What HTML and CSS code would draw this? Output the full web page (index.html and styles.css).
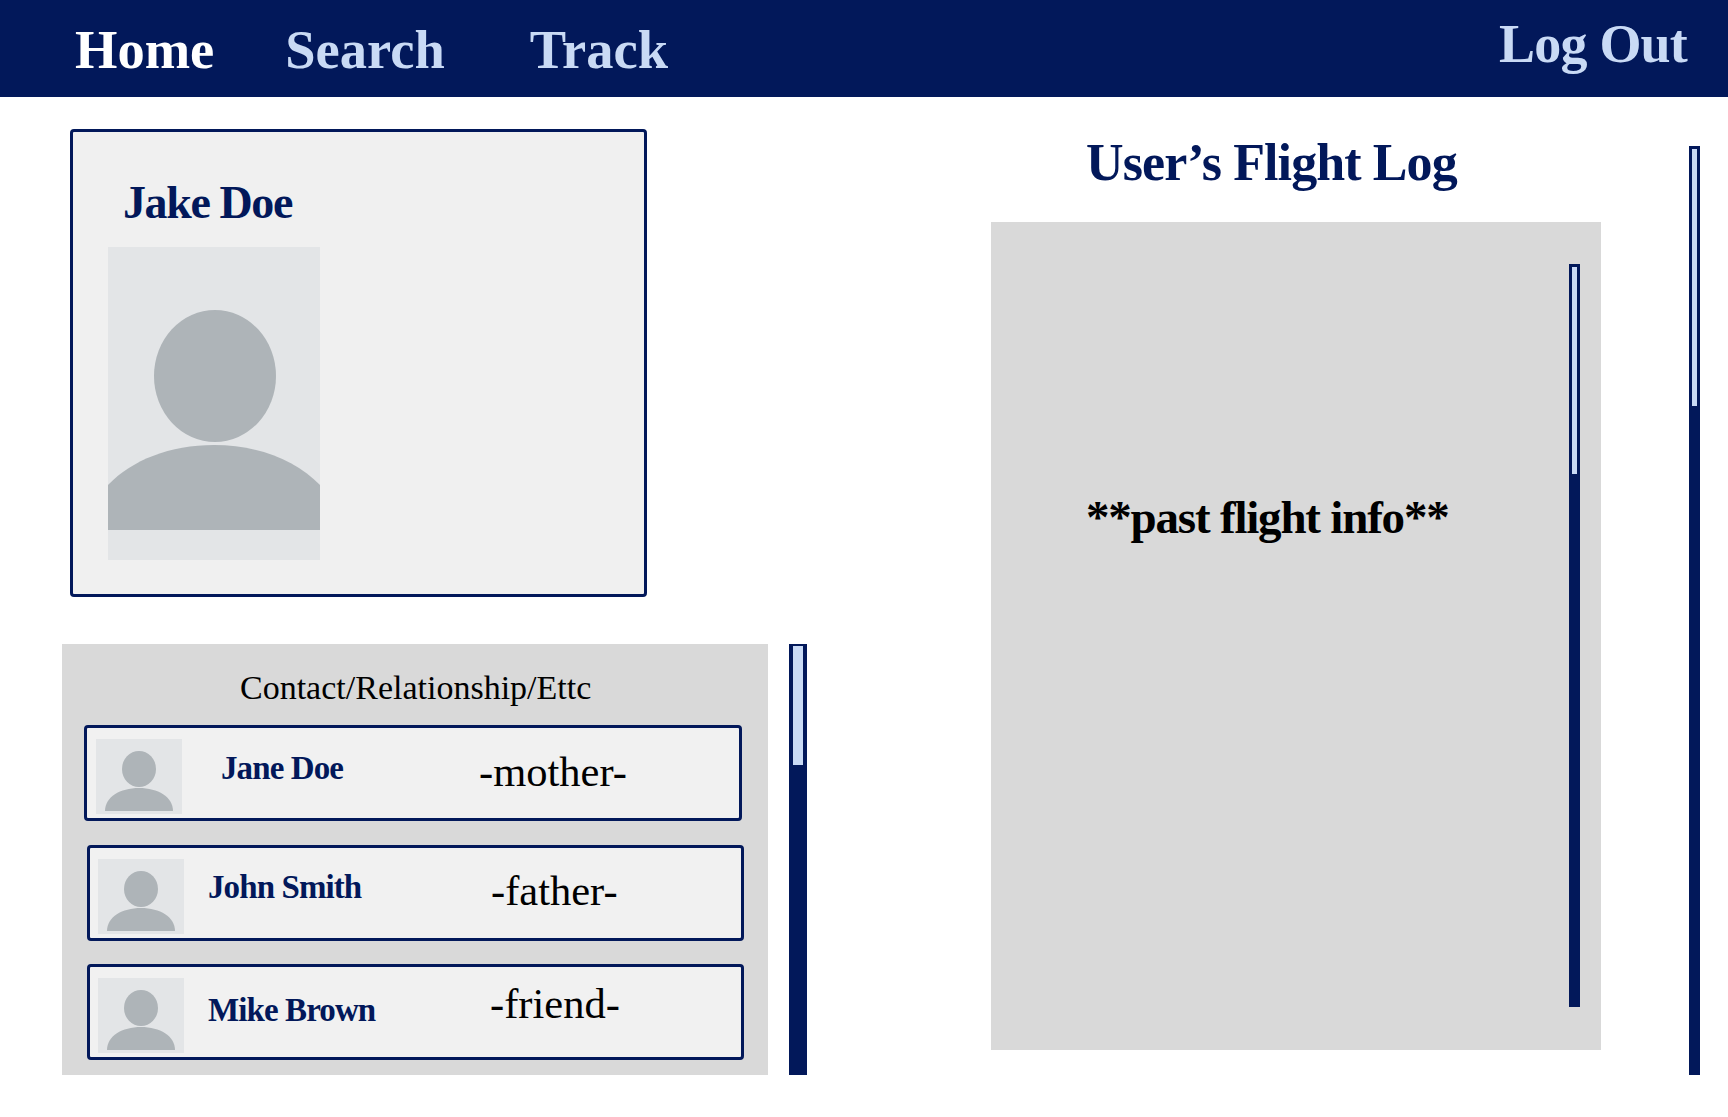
FILE: index.html
```html
<html>
  <head>
    <title>Profile</title>
    <link rel="stylesheet" href="styles.css">
  </head>

  <body>
    <header class="topbar">
      <nav class="nav">
        <a class="nav-link active home">Home</a>
        <a class="nav-link search">Search</a>
        <a class="nav-link track">Track</a>
      </nav>
      <a class="logout">Log Out</a>
    </header>

    <main class="page">
      <section class="left-col">
        <div class="profile-card">
          <h2 class="profile-name">Jake Doe</h2>
          <svg class="profile-pic" viewBox="0 0 212 313">
            <rect width="212" height="313" fill="#e3e5e7"/>
            <ellipse cx="107" cy="129" rx="61" ry="66" fill="#aeb4b8"/>
            <path d="M0 283V238C24 213 62 198 106 198C150 198 188 213 212 238V283Z" fill="#aeb4b8"/>
          </svg>
        </div>

        <div class="contacts-wrap">
          <div class="contacts">
            <p class="contacts-title">Contact/Relationship/Ettc</p>

            <div class="contact first">
              <svg class="contact-pic" viewBox="0 0 86 75">
                <rect width="86" height="75" fill="#e3e5e7"/>
                <ellipse cx="43" cy="30" rx="17" ry="18" fill="#aeb4b8"/>
                <path d="M9 72C9 58 24 49 43 49C62 49 77 58 77 72Z" fill="#aeb4b8"/>
              </svg>
              <span class="contact-name jane">Jane Doe</span>
              <span class="contact-rel mother">-mother-</span>
            </div>

            <div class="contact">
              <svg class="contact-pic" viewBox="0 0 86 75">
                <rect width="86" height="75" fill="#e3e5e7"/>
                <ellipse cx="43" cy="30" rx="17" ry="18" fill="#aeb4b8"/>
                <path d="M9 72C9 58 24 49 43 49C62 49 77 58 77 72Z" fill="#aeb4b8"/>
              </svg>
              <span class="contact-name john">John Smith</span>
              <span class="contact-rel father">-father-</span>
            </div>

            <div class="contact">
              <svg class="contact-pic" viewBox="0 0 86 75">
                <rect width="86" height="75" fill="#e3e5e7"/>
                <ellipse cx="43" cy="30" rx="17" ry="18" fill="#aeb4b8"/>
                <path d="M9 72C9 58 24 49 43 49C62 49 77 58 77 72Z" fill="#aeb4b8"/>
              </svg>
              <span class="contact-name mike">Mike Brown</span>
              <span class="contact-rel friend">-friend-</span>
            </div>
          </div>
          <div class="scrollbar contacts-bar"><div class="thumb"></div></div>
        </div>
      </section>

      <section class="log-col">
        <h1 class="log-title">User’s Flight Log</h1>
        <div class="log-panel">
          <p class="log-text">**past flight info**</p>
          <div class="scrollbar log-bar"><div class="thumb"></div></div>
        </div>
      </section>

      <div class="scrollbar page-bar"><div class="thumb"></div></div>
    </main>
  </body>
</html>
```

FILE: styles.css
```css
/* general styling */
:root {
  --navy: #02185a;
  --light: #c9daf5;
}

* {
  box-sizing: border-box;
  margin: 0;
  padding: 0;
}

body {
  background-color: #fff;
  font-family: "Liberation Serif", "DejaVu Serif", serif;
}

/* top bar */
.topbar {
  align-items: flex-start;
  background-color: var(--navy);
  display: flex;
  height: 97px;
  justify-content: space-between;
  padding: 17px 41px 0 75px;
}

.nav {
  display: flex;
}

.nav-link {
  color: var(--light);
  font-size: 54.5px;
  font-weight: bold;
  line-height: 66px;
}

.nav-link.active {
  color: #fff;
}

.search {
  margin-left: 71px;
}

.track {
  margin-left: 85px;
}

.logout {
  color: var(--light);
  font-size: 54px;
  font-weight: bold;
  letter-spacing: -0.8px;
  line-height: 66px;
  margin-top: -6px;
}

/* page columns */
.page {
  display: flex;
  height: 1020px;
}

.left-col {
  flex: none;
  padding-left: 62px;
  width: 807px;
}

.profile-card {
  background-color: #f0f0f0;
  border: 3px solid var(--navy);
  border-radius: 4px;
  height: 468px;
  margin: 32px 0 0 8px;
  padding: 41px 0 0 35px;
  width: 577px;
}

.profile-name {
  color: var(--navy);
  font-size: 46px;
  font-weight: bold;
  height: 74px;
  letter-spacing: -1.4px;
  line-height: 60px;
  margin-left: 15px;
}

.profile-pic {
  display: block;
  height: 313px;
  width: 212px;
}

/* contacts */
.contacts-wrap {
  display: flex;
  gap: 21px;
  margin-top: 47px;
}

.contacts {
  background-color: #d9d9d9;
  height: 431px;
  padding-top: 24px;
  width: 706px;
}

.contacts-title {
  font-size: 34px;
  height: 57px;
  line-height: 40px;
  padding-left: 178px;
}

.contact {
  align-items: flex-start;
  background-color: #f1f1f1;
  border: 3px solid var(--navy);
  border-radius: 4px;
  display: flex;
  height: 96px;
  margin: 0 0 23px 25px;
  padding: 11px 0 0 8px;
  width: 657px;
}

.contact.first {
  margin: 0 0 24px 22px;
  padding-left: 9px;
  width: 658px;
}

.contact-pic {
  flex: none;
  height: 75px;
  width: 86px;
}

.contact-name {
  color: var(--navy);
  flex: none;
  font-size: 33px;
  font-weight: bold;
  letter-spacing: -0.9px;
  line-height: 40px;
  margin: 8px 0 0 24px;
  width: 270px;
}

.contact-rel {
  font-size: 42.5px;
  line-height: 46px;
  margin-top: 10px;
}

.jane {
  margin-left: 39px;
  margin-top: 9px;
  width: 257px;
}

.mike {
  margin-top: 12px;
}

.mother {
  margin-left: 1px;
}

.father {
  margin-left: 13px;
  margin-top: 9px;
}

.friend {
  margin-left: 12px;
  margin-top: 3px;
}

/* flight log */
.log-col {
  flex: none;
  margin-left: 184px;
  width: 610px;
}

.log-title {
  color: var(--navy);
  font-size: 52px;
  font-weight: bold;
  height: 125px;
  letter-spacing: -0.9px;
  line-height: 66px;
  padding: 33px 0 0 95px;
}

.log-panel {
  background-color: #d9d9d9;
  display: flex;
  height: 828px;
  justify-content: space-between;
  padding: 42px 21px 0 95px;
}

.log-text {
  font-size: 47px;
  font-weight: bold;
  letter-spacing: -1.2px;
  line-height: 58px;
  padding-top: 224px;
}

/* fake scrollbars */
.scrollbar {
  background-color: var(--navy);
  flex: none;
  padding: 3px 3px 0;
}

.thumb {
  background-color: var(--light);
}

.contacts-bar {
  height: 431px;
  padding: 2px 4px 0;
  width: 18px;
}

.contacts-bar .thumb {
  height: 119px;
}

.log-bar {
  height: 743px;
  width: 11px;
}

.log-bar .thumb {
  height: 207px;
}

.page-bar {
  height: 929px;
  margin: 49px 0 0 88px;
  width: 11px;
}

.page-bar .thumb {
  height: 257px;
}
```
